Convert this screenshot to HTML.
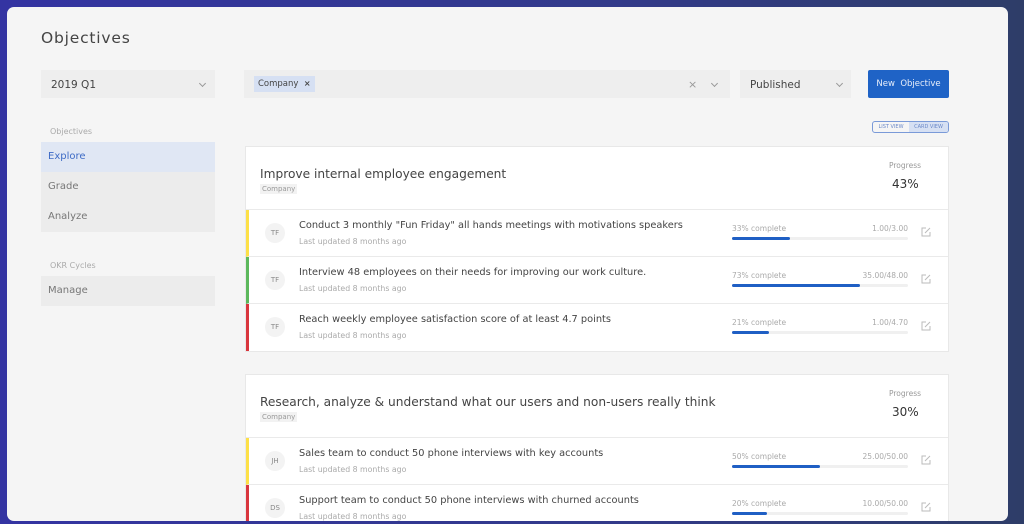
<!DOCTYPE html>
<html><head><meta charset="utf-8"><style>
*{box-sizing:border-box;margin:0;padding:0}
body{width:1024px;height:524px;overflow:hidden;background:linear-gradient(90deg,#3434a2 0%,#323a8a 60%,#2e3d68 100%);font-family:"DejaVu Sans","Liberation Sans",sans-serif;position:relative}
.panel{position:absolute;left:7px;top:7px;width:1001px;height:514px;background:#f5f5f5;border-radius:7px;overflow:hidden}
.a{position:absolute}
h1{position:absolute;left:34px;top:22px;font-size:15.5px;font-weight:normal;color:#444;letter-spacing:.8px}
.sel{background:#eeeeee;height:28px;font-size:10.5px;color:#444;line-height:30px;padding-left:10px}
.chev{position:absolute;top:11px;width:5px;height:5px;border-right:1px solid #999;border-bottom:1px solid #999;transform:rotate(45deg)}
.lab{font-size:8px;color:#aaa}
.nav{left:34px;width:174px;height:30px;background:#ececec;font-size:10px;color:#777;line-height:30px;padding-left:7px}
.card{position:absolute;left:238px;width:704px;background:#fff;border:1px solid #e8e8e8}
.hd{position:relative;height:63px;border-bottom:1px solid #eaeaea}
.ttl{position:absolute;left:14px;top:20px;font-size:12.2px;color:#444}
.tag{position:absolute;left:14px;top:37px;font-size:7px;color:#999;background:#f2f2f2;padding:1px 2px}
.pl{position:absolute;left:643px;top:14px;font-size:7.5px;color:#999}
.pv{position:absolute;left:646px;top:30px;font-size:12px;color:#333}
.row{position:relative;height:47px;border-bottom:1px solid #eaeaea;border-left:3px solid #fde047}
.av{position:absolute;left:16px;top:13px;width:20px;height:20px;border-radius:50%;background:#f3f3f3;font-size:7px;color:#888;text-align:center;line-height:20px}
.rt{position:absolute;left:50px;top:10px;font-size:9.8px;color:#444}
.rs{position:absolute;left:50px;top:27px;font-size:7.8px;color:#aaa}
.pc{position:absolute;left:483px;top:14px;font-size:7.5px;color:#aaa}
.pn{position:absolute;left:483px;width:176px;top:14px;font-size:7.5px;color:#aaa;text-align:right}
.bar{position:absolute;left:483px;top:27px;width:176px;height:3px;background:#f0f0f0;border-radius:2px}
.bar i{display:block;height:3px;background:#1f5fc4;border-radius:2px}
.ed{position:absolute;left:672px;top:17px}
</style></head><body>
<div class="panel">
<h1>Objectives</h1>
<div class="a sel" style="left:34px;top:63px;width:174px">2019 Q1<span class="chev" style="left:159px"></span></div>
<div class="a sel" style="left:237px;top:63px;width:486px"><span style="position:absolute;left:10px;top:6px;height:16px;line-height:16px;background:#d6e0f3;font-size:8.5px;padding:0 4px;color:#444">Company&nbsp; <b style="font-size:8px">×</b></span><span style="position:absolute;left:444px;font-size:11px;color:#999">×</span><span class="chev" style="left:468px"></span></div>
<div class="a sel" style="left:733px;top:63px;width:111px">Published<span class="chev" style="left:97px"></span></div>
<div class="a" style="left:861px;top:63px;width:81px;height:28px;background:#1f63c6;border-radius:2px;color:#e8eefa;font-size:8.5px;line-height:29px;text-align:center">New&nbsp; Objective</div>
<div class="a" style="left:865px;top:114px;width:77px;height:12px;border:1px solid #7a9ad8;border-radius:3px;font-size:5px;line-height:10px;color:#6a88c8;overflow:hidden"><span style="display:inline-block;width:36px;text-align:center">LIST VIEW</span><span style="display:inline-block;width:39px;text-align:center;background:#d6e0f3">CARD VIEW</span></div>
<div class="a lab" style="left:43px;top:120px">Objectives</div>
<div class="a nav" style="top:135px;background:#e0e7f4;color:#3f6cc6">Explore</div>
<div class="a nav" style="top:165px">Grade</div>
<div class="a nav" style="top:195px">Analyze</div>
<div class="a lab" style="left:43px;top:254px">OKR Cycles</div>
<div class="a nav" style="top:269px">Manage</div>

<div class="card" style="top:139px">
<div class="hd"><div class="ttl">Improve internal employee engagement</div><div class="tag">Company</div><div class="pl">Progress</div><div class="pv">43%</div></div>
<div class="row"><div class="av">TF</div><div class="rt">Conduct 3 monthly "Fun Friday" all hands meetings with motivations speakers</div><div class="rs">Last updated 8 months ago</div><div class="pc">33% complete</div><div class="pn">1.00/3.00</div><div class="bar"><i style="width:33%"></i></div><svg class="ed" width="10" height="10" viewBox="0 0 10 10" fill="none" stroke="#bbb" stroke-width="1"><path d="M5 1H1v8h8V5M4 6l5-5"/></svg></div>
<div class="row" style="border-left-color:#5cb85c"><div class="av">TF</div><div class="rt">Interview 48 employees on their needs for improving our work culture.</div><div class="rs">Last updated 8 months ago</div><div class="pc">73% complete</div><div class="pn">35.00/48.00</div><div class="bar"><i style="width:73%"></i></div><svg class="ed" width="10" height="10" viewBox="0 0 10 10" fill="none" stroke="#bbb" stroke-width="1"><path d="M5 1H1v8h8V5M4 6l5-5"/></svg></div>
<div class="row" style="border-left-color:#d9363e;border-bottom:none"><div class="av">TF</div><div class="rt">Reach weekly employee satisfaction score of at least 4.7 points</div><div class="rs">Last updated 8 months ago</div><div class="pc">21% complete</div><div class="pn">1.00/4.70</div><div class="bar"><i style="width:21%"></i></div><svg class="ed" width="10" height="10" viewBox="0 0 10 10" fill="none" stroke="#bbb" stroke-width="1"><path d="M5 1H1v8h8V5M4 6l5-5"/></svg></div>
</div>

<div class="card" style="top:367px;height:160px">
<div class="hd"><div class="ttl">Research, analyze &amp; understand what our users and non-users really think</div><div class="tag">Company</div><div class="pl">Progress</div><div class="pv">30%</div></div>
<div class="row"><div class="av">JH</div><div class="rt">Sales team to conduct 50 phone interviews with key accounts</div><div class="rs">Last updated 8 months ago</div><div class="pc">50% complete</div><div class="pn">25.00/50.00</div><div class="bar"><i style="width:50%"></i></div><svg class="ed" width="10" height="10" viewBox="0 0 10 10" fill="none" stroke="#bbb" stroke-width="1"><path d="M5 1H1v8h8V5M4 6l5-5"/></svg></div>
<div class="row" style="border-left-color:#d9363e"><div class="av">DS</div><div class="rt">Support team to conduct 50 phone interviews with churned accounts</div><div class="rs">Last updated 8 months ago</div><div class="pc">20% complete</div><div class="pn">10.00/50.00</div><div class="bar"><i style="width:20%"></i></div><svg class="ed" width="10" height="10" viewBox="0 0 10 10" fill="none" stroke="#bbb" stroke-width="1"><path d="M5 1H1v8h8V5M4 6l5-5"/></svg></div>
</div>
</div>
</body></html>
